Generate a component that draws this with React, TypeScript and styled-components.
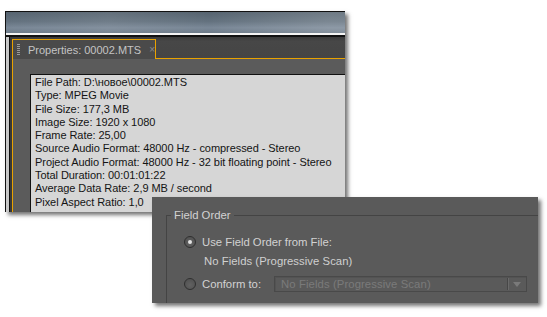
import React from 'react'
import styled, { createGlobalStyle } from 'styled-components'

const GlobalStyle = createGlobalStyle`
  html, body {
    margin: 0;
    padding: 0;
    background: #ffffff;
  }
`

const Page = styled.div`
  position: relative;
  width: 547px;
  height: 317px;
  overflow: hidden;
  background: #ffffff;
  font-family: 'Liberation Sans', Arial, sans-serif;
`

const Window = styled.div`
  margin: 11px 0 0 5px;
  width: 340px;
  height: 201px;
  display: flex;
  flex-direction: column;
  border-top: 1px solid #111;
  border-left: 1px solid #111;
  box-sizing: border-box;
  box-shadow: 3px 3px 4px rgba(0, 0, 0, 0.55);
`

const TitleStrip = styled.div`
  height: 21px;
  flex: none;
  background: linear-gradient(
      90deg,
      rgba(255, 255, 255, 0) 0%,
      rgba(255, 255, 255, 0.08) 30%,
      rgba(255, 255, 255, 0) 60%,
      rgba(255, 255, 255, 0.15) 95%
    ),
    linear-gradient(180deg, #56636f 0%, #64727f 45%, #7a8897 75%, #6c7a88 100%);
  border-bottom: 2px solid #f4f4f4;
`

const Frame = styled.div`
  flex: 1;
  display: flex;
  border-top: 2px solid #111;
  background: #c8c8c8;
  padding-left: 3px;
  min-height: 0;
`

const FrameInner = styled.div`
  flex: 1;
  display: flex;
  border-left: 1px solid #111;
  background: #383838;
  padding-left: 2px;
  min-width: 0;
`

const Panel = styled.div`
  flex: 1;
  display: flex;
  flex-direction: column;
  border-left: 1px solid #e8a200;
  min-width: 0;
`

const TabBar = styled.div`
  height: 21px;
  flex: none;
  display: flex;
  align-items: flex-end;
  background: linear-gradient(180deg, #3a3a3a 0%, #474747 20%, #454545 100%);
  border-bottom: 1px solid #e8a200;
  margin-left: -1px;
`

const Tab = styled.div`
  height: 20px;
  margin-bottom: -1px;
  width: 144px;
  display: flex;
  align-items: center;
  box-sizing: border-box;
  border: 1px solid #e8a200;
  border-bottom: none;
  background: #4a4a4a;
  padding-left: 4px;
  color: #c4c4c4;
  font-size: 11px;
`

const Grip = styled.div`
  width: 3px;
  height: 11px;
  margin-right: 8px;
  background: repeating-linear-gradient(
    180deg,
    #9a9a9a 0px,
    #9a9a9a 1px,
    transparent 1px,
    transparent 2px
  );
`

const Close = styled.span`
  margin-left: 8px;
  color: #8a8a8a;
  font-size: 10px;
`

const PanelBody = styled.div`
  flex: 1;
  background: #5b5b5b;
  padding: 15px 0 0 17px;
  display: flex;
  min-height: 0;
`

const Content = styled.div`
  flex: 1;
  background: #d6d6d6;
  border-top: 1px solid #111;
  border-left: 1px solid #111;
  padding: 1px 0 0 4px;
  color: #141414;
  font-size: 11px;
  line-height: 13.3px;
  letter-spacing: -0.06px;
  white-space: nowrap;
  overflow: hidden;
`

const Dialog = styled.div`
  position: absolute;
  left: 152px;
  top: 197px;
  width: 386px;
  height: 106px;
  background: #5a5a5a;
  box-shadow: 3px 3px 4px rgba(0, 0, 0, 0.55);
  padding: 12px 0 0 14px;
  box-sizing: border-box;
  overflow: hidden;
  color: #d2d2d2;
  font-size: 11.3px;
`

const Group = styled.fieldset`
  margin: 0;
  padding: 0 0 0 4px;
  border: none;
  border-top: 1px solid #444;
  border-left: 1px solid #444;
  height: 120px;
  min-width: 0;
`

const Legend = styled.legend`
  padding: 0 3px;
  margin-left: 0;
  color: #d2d2d2;
`

const Row = styled.div<{ $top: number; $indent: number }>`
  display: flex;
  align-items: center;
  margin-top: ${({ $top }) => $top}px;
  margin-left: ${({ $indent }) => $indent}px;
  height: 16px;
`

const Radio = styled.span<{ $checked?: boolean }>`
  width: 12px;
  height: 12px;
  box-sizing: border-box;
  border-radius: 50%;
  border: 1px solid #2f2f2f;
  background: radial-gradient(circle at 50% 60%, #626262 0%, #535353 70%, #6a6a6a 100%);
  margin-right: 6px;
  display: flex;
  align-items: center;
  justify-content: center;
  flex: none;

  &::after {
    content: '';
    display: ${({ $checked }) => ($checked ? 'block' : 'none')};
    width: 4px;
    height: 4px;
    border-radius: 50%;
    background: #e4e4e4;
  }
`

const Note = styled.span`
  color: #d0d0d0;
  letter-spacing: 0.05px;
`

const Label = styled.span`
  letter-spacing: 0px;
`

const Select = styled.div`
  margin-left: 13px;
  width: 253px;
  height: 16px;
  box-sizing: border-box;
  border: 1px solid #494949;
  box-shadow: inset 1px 1px 0 #535353;
  display: flex;
  align-items: center;
  color: #7a7a7a;
  letter-spacing: 0.1px;
`

const SelectText = styled.span`
  flex: 1;
  padding-left: 6px;
`

const SelectButton = styled.div`
  width: 18px;
  height: 12px;
  border-left: 1px solid #474747;
  box-shadow: inset 1px 0 0 #6a6a6a;
  display: flex;
  align-items: center;
  justify-content: center;
`

const lines = [
  'File Path: D:\\новое\\00002.MTS',
  'Type: MPEG Movie',
  'File Size: 177,3 MB',
  'Image Size: 1920 x 1080',
  'Frame Rate: 25,00',
  'Source Audio Format: 48000 Hz - compressed - Stereo',
  'Project Audio Format: 48000 Hz - 32 bit floating point - Stereo',
  'Total Duration: 00:01:01:22',
  'Average Data Rate: 2,9 MB / second',
  'Pixel Aspect Ratio: 1,0',
]

export default function App() {
  return (
    <Page>
      <GlobalStyle />
      <Window>
        <TitleStrip />
        <Frame>
          <FrameInner>
            <Panel>
              <TabBar>
                <Tab>
                  <Grip />
                  Properties: 00002.MTS
                  <Close>×</Close>
                </Tab>
              </TabBar>
              <PanelBody>
                <Content>
                  {lines.map((l) => (
                    <div key={l}>{l}</div>
                  ))}
                </Content>
              </PanelBody>
            </Panel>
          </FrameInner>
        </Frame>
      </Window>

      <Dialog>
        <Group>
          <Legend>Field Order</Legend>
          <Row $top={13} $indent={13}>
            <Radio $checked />
            <Label>Use Field Order from File:</Label>
          </Row>
          <Row $top={3} $indent={33}>
            <Note>No Fields (Progressive Scan)</Note>
          </Row>
          <Row $top={7} $indent={13}>
            <Radio />
            <Label>Conform to:</Label>
            <Select>
              <SelectText>No Fields (Progressive Scan)</SelectText>
              <SelectButton>
                <svg width="8" height="5" viewBox="0 0 8 5">
                  <path d="M0 0 L8 0 L4 5 Z" fill="#7a7a7a" />
                </svg>
              </SelectButton>
            </Select>
          </Row>
        </Group>
      </Dialog>
    </Page>
  )
}
